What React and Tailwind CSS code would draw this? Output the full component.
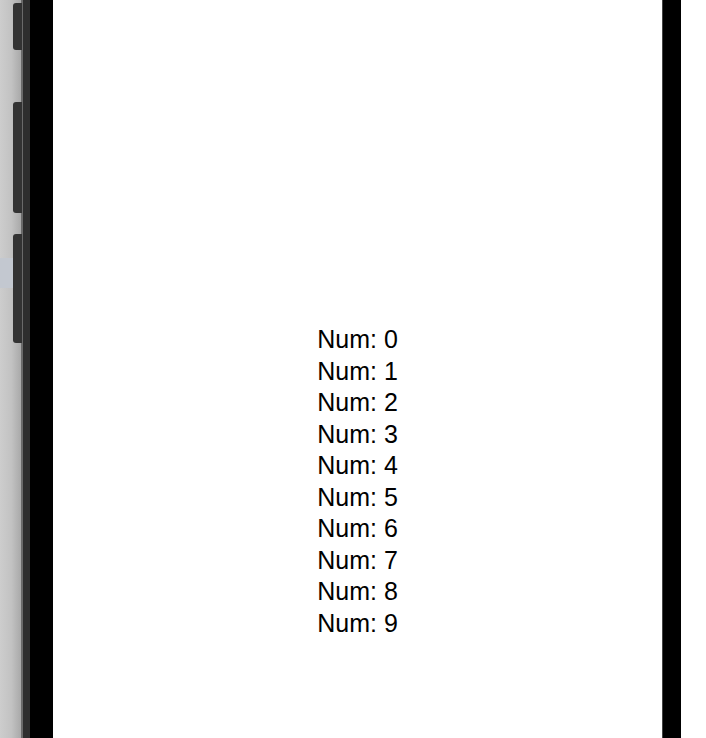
const nums = [0, 1, 2, 3, 4, 5, 6, 7, 8, 9];

const App = () => {
  return (
    <div className="flex h-[738px] w-[706px] overflow-hidden bg-white">
      {/* Device side: grey frame with the hardware buttons */}
      <div className="relative w-[23px] flex-shrink-0 bg-gradient-to-r from-[#cdcdcd] via-[#c2c2c2] to-[#a4a4a4]">
        <div className="absolute left-0 top-[258px] h-[30px] w-[13px] bg-[#c3c8d0]" />
        <div className="absolute right-0 top-0 h-full w-[2px] bg-[#6a6a6a]" />
        <div className="relative flex flex-col pl-[13px]">
          <div className="mt-[3px] h-[47px] w-[9px] rounded-l-[3px] bg-[#333333]" />
          <div className="mt-[52px] h-[111px] w-[9px] rounded-l-[3px] bg-[#333333]" />
          <div className="mt-[21px] h-[109px] w-[9px] rounded-l-[3px] bg-[#333333]" />
        </div>
      </div>
      <div className="w-[7px] flex-shrink-0 bg-[#2e2e2e]" />
      <div className="w-[23px] flex-shrink-0 bg-black" />

      {/* Screen */}
      <div
        className="flex w-[609px] flex-shrink-0 flex-col items-center bg-white pt-[324px] text-[25px] leading-[31.5px] text-black"
        style={{ fontFamily: '"Liberation Sans", Arial, sans-serif' }}
      >
        {nums.map((n) => (
          <div key={n}>Num: {n}</div>
        ))}
      </div>

      <div className="w-px flex-shrink-0 bg-[#444444]" />
      <div className="w-[18px] flex-shrink-0 bg-black" />
      <div className="flex-1 bg-white" />
    </div>
  );
};

export default App;
